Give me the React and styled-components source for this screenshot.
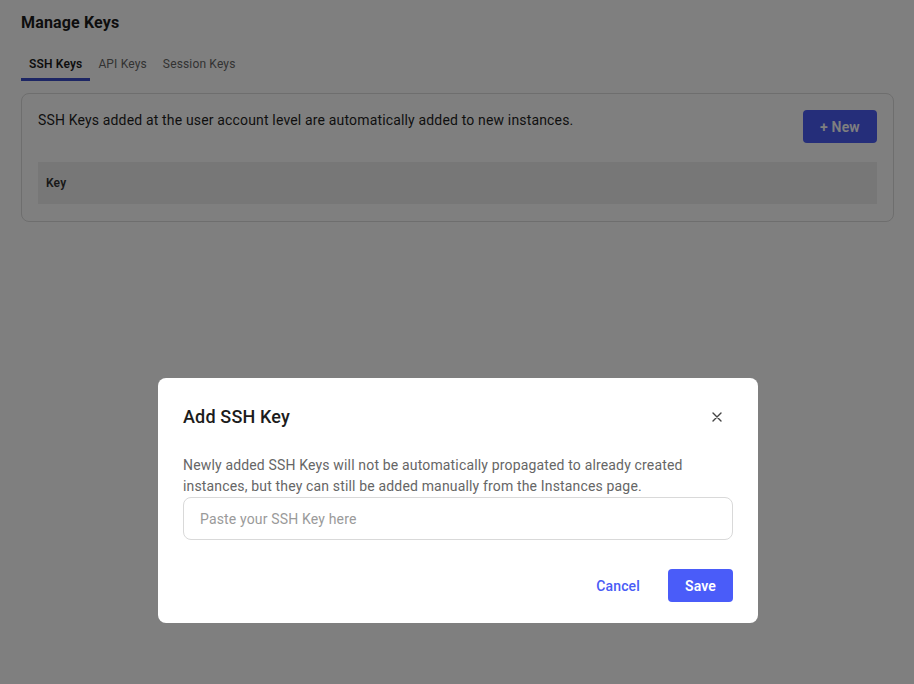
import React from 'react'
import styled, { createGlobalStyle } from 'styled-components'

const GlobalStyle = createGlobalStyle`
  body {
    margin: 0;
    background: #ffffff;
    font-family: Roboto, 'Liberation Sans', sans-serif;
    letter-spacing: 0.01em;
    color: #1f1f1f;
  }
  button, input {
    letter-spacing: inherit;
  }
`

const Page = styled.div`
  padding: 13px 20px 0 21px;
`

const Title = styled.h1`
  margin: 0;
  font-size: 16px;
  font-weight: 700;
  line-height: 19px;
  color: #1c1c1c;
`

const Tabs = styled.div`
  display: flex;
  margin-top: 22px;
`

const Tab = styled.button`
  background: transparent;
  border: none;
  border-bottom: 3px solid ${(p) => (p.$active ? '#3b4cc9' : 'transparent')};
  padding: 3px 8px 7px;
  font-family: inherit;
  font-size: 12px;
  font-weight: ${(p) => (p.$active ? 600 : 400)};
  color: ${(p) => (p.$active ? '#1c1c1c' : '#666')};
  cursor: pointer;
`

const Card = styled.section`
  margin-top: 12px;
  border: 1px solid #dcdcdc;
  border-radius: 8px;
  padding: 16px 16px 17px 16px;
`

const CardHead = styled.div`
  display: flex;
  justify-content: space-between;
  align-items: flex-start;
`

const Lead = styled.p`
  margin: 1px 0 0;
  font-size: 14px;
  line-height: 18px;
  color: #1f1f1f;
`

const NewButton = styled.button`
  width: 74px;
  height: 33px;
  border: none;
  border-radius: 4px;
  background: #4a5cf5;
  color: #fff;
  font-family: inherit;
  font-size: 14px;
  font-weight: 600;
`

const TableHead = styled.div`
  margin-top: 19px;
  height: 42px;
  background: #eeeeee;
  display: flex;
  align-items: center;
  padding-left: 8px;
  font-size: 12px;
  font-weight: 600;
  color: #333;
`

const Overlay = styled.div`
  position: fixed;
  inset: 0;
  background: rgba(0, 0, 0, 0.5);
  display: flex;
  align-items: flex-start;
  justify-content: center;
  padding-top: 378px;
`

const Modal = styled.div`
  width: 600px;
  box-sizing: border-box;
  background: #fff;
  border-radius: 8px;
  padding: 25px 25px 21px;
  margin-left: 2px;
`

const ModalHead = styled.div`
  display: flex;
  justify-content: space-between;
  align-items: center;
  height: 27px;
`

const ModalTitle = styled.h2`
  margin: 0;
  font-size: 18px;
  font-weight: 500;
  color: #1c1c1c;
`

const CloseButton = styled.button`
  background: transparent;
  border: none;
  padding: 0;
  margin-right: 8px;
  width: 16px;
  height: 16px;
  display: flex;
  align-items: center;
  justify-content: center;
  color: #444;
`

const Description = styled.p`
  margin: 25px 0 0;
  font-size: 14px;
  line-height: 21px;
  color: #666;
`

const Input = styled.input`
  display: block;
  width: 100%;
  box-sizing: border-box;
  margin-top: 0;
  height: 43px;
  border: 1px solid #d9d9d9;
  border-radius: 8px;
  padding: 0 16px;
  font-family: inherit;
  font-size: 14px;
  outline: none;
  &::placeholder {
    color: #9a9a9a;
  }
`

const Actions = styled.div`
  display: flex;
  justify-content: flex-end;
  align-items: center;
  gap: 16px;
  margin-top: 29px;
`

const TextButton = styled.button`
  background: transparent;
  border: none;
  padding: 0 12px;
  height: 33px;
  font-family: inherit;
  font-size: 14px;
  font-weight: 500;
  color: #4a5cf5;
`

const PrimaryButton = styled.button`
  width: 65px;
  height: 33px;
  border: none;
  border-radius: 4px;
  background: #4a5cf9;
  color: #fff;
  font-family: inherit;
  font-size: 14px;
  font-weight: 600;
`

const App = () => {
  return (
    <>
      <GlobalStyle />
      <Page>
        <Title>Manage Keys</Title>
        <Tabs>
          <Tab $active>SSH Keys</Tab>
          <Tab>API Keys</Tab>
          <Tab>Session Keys</Tab>
        </Tabs>
        <Card>
          <CardHead>
            <Lead>SSH Keys added at the user account level are automatically added to new instances.</Lead>
            <NewButton>+ New</NewButton>
          </CardHead>
          <TableHead>Key</TableHead>
        </Card>
      </Page>
      <Overlay>
        <Modal>
          <ModalHead>
            <ModalTitle>Add SSH Key</ModalTitle>
            <CloseButton aria-label='close'>
              <svg width='10' height='10' viewBox='0 0 10 10'>
                <path d='M1 1L9 9M9 1L1 9' stroke='currentColor' strokeWidth='1.4' strokeLinecap='round' />
              </svg>
            </CloseButton>
          </ModalHead>
          <Description>
            Newly added SSH Keys will not be automatically propagated to already created instances, but they can still be added manually from the Instances page.
          </Description>
          <Input placeholder='Paste your SSH Key here' />
          <Actions>
            <TextButton>Cancel</TextButton>
            <PrimaryButton>Save</PrimaryButton>
          </Actions>
        </Modal>
      </Overlay>
    </>
  )
}

export default App
